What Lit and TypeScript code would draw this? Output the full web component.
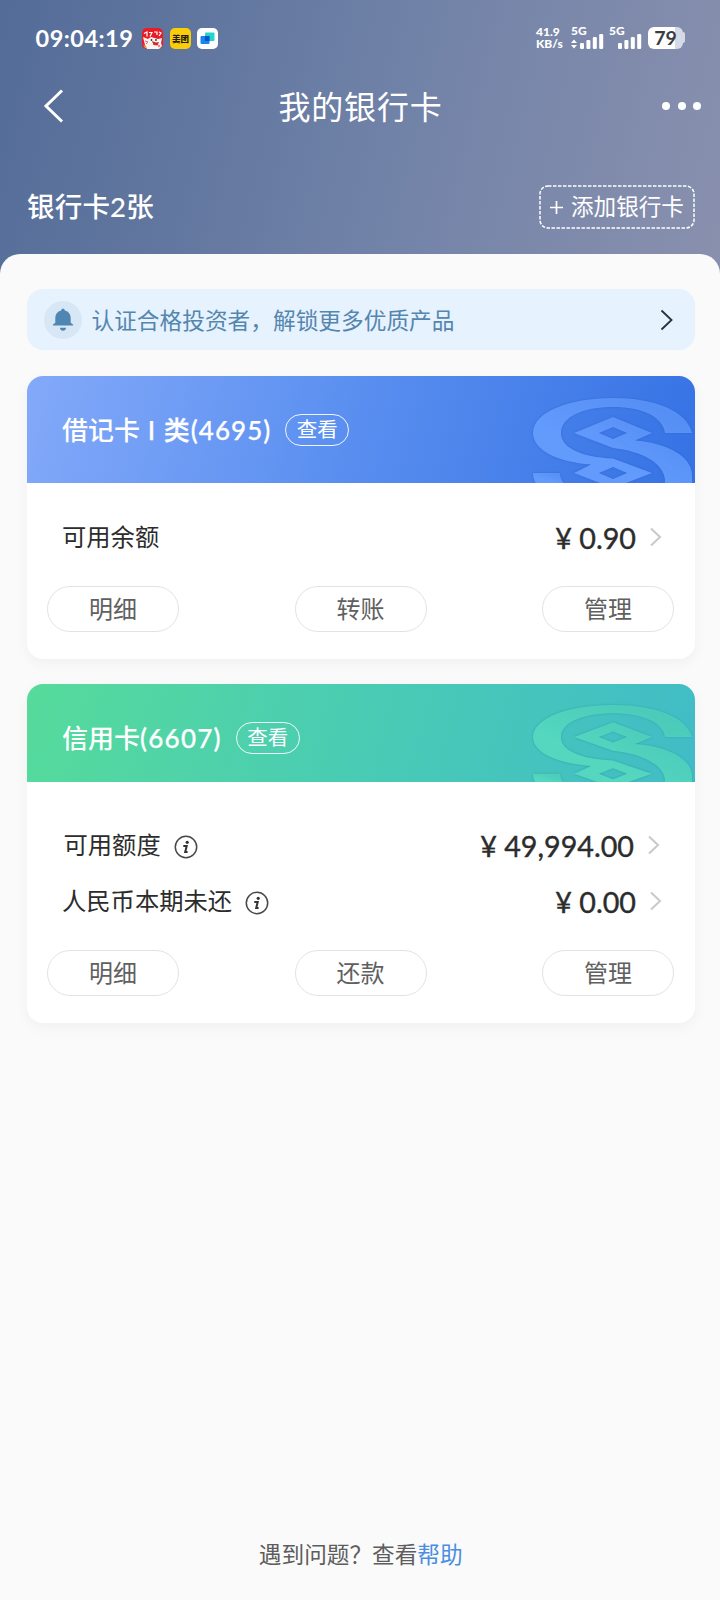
import { LitElement, html, css, svg } from "lit";
import { customElement, property } from "lit/decorators.js";

const chevron = html`<svg class="chev" width="12" height="20" viewBox="0 0 12 20"><path d="M1 1.500 10 10 1 18.500" fill="none" stroke="currentColor" stroke-width="2"/></svg>`;

const emblem = svg`
  <defs><linearGradient id="sheen" x1="0" y1="1" x2="0.900" y2="0"><stop offset="0.400" stop-color="currentColor"/><stop offset="1" stop-color="currentColor" stop-opacity="0.700"/></linearGradient></defs>
  <g fill="url(#sheen)" fill-rule="evenodd">
    <path d="M159 36H132C130 20 110 10 80 10C50 10 28 20 28 36C28 51 48 60 80 61.500L119 76L80 91L41 76L58 67.500C24 65 0 53 0 36C0 15 36 1 80 1C122 1 154 14 159 36ZM66 76L80 82L94 76L80 70Z"/>
    <path d="M80 20 119 36 102 43.500C135 46 159 60 159 78V100H128C131 94 132 89 132 84C132 66 108 54 80 51L41 36ZM66 36L80 42L94 36L80 30Z"/>
    <path d="M0 76H27C27 80 29 84 31 87H3C1 83 0 80 0 76Z"/>
  </g>`;

@customElement("bank-card")
export class BankCard extends LitElement {
  @property() name = "";
  @property() suffix = "";
  @property() kind = "debit";
  @property({ attribute: false }) rows: { label: string; amount: string; info?: boolean }[] = [];
  @property({ attribute: false }) actions: string[] = [];

  static styles = css`
    :host { display: block; border-radius: 16px; background: #fff; box-shadow: 0 4px 14px rgba(0, 0, 0, 0.045); overflow: hidden; }
    .head { display: flex; align-items: center; position: relative; overflow: hidden; box-sizing: border-box; padding-left: 35.500px; color: #fff; }
    .debit .head { height: 107px; background: linear-gradient(105deg, #83a9f9 0%, #5a8ff0 48%, #3572e4 100%); }
    .credit .head { height: 98px; background: linear-gradient(105deg, #56db9b 0%, #4accb3 48%, #41bcc7 100%); padding-top: 9px; }
    .mark { position: absolute; right: 2px; bottom: 0; width: 160px; }
    .debit .mark { height: 86px; color: #639bfd; filter: drop-shadow(0 0 1px rgba(35, 90, 200, 0.6)); }
    .credit .mark { height: 78px; color: #54d6bf; filter: drop-shadow(0 0 1px rgba(30, 140, 145, 0.6)); }
    .name { font-size: 26px; line-height: 34px; font-weight: 500; white-space: pre; }
    .suffix { letter-spacing: 1.050px; -webkit-text-stroke: 0.250px #fff; }
    .credit .suffix { letter-spacing: 1.250px; }
    .view { margin-left: 14px; width: 62px; height: 30px; border: 1px solid rgba(255, 255, 255, 0.9); border-radius: 16px; font-size: 20.500px; line-height: 29px; text-align: center; }
    .row { display: flex; align-items: center; height: 56px; padding: 0 33px 0 35.500px; color: #2c2c2c; }
    .debit .rows { padding: 26px 0 21px; }
    .credit .rows { padding: 35px 0 21px; }
    .credit .row:first-child { padding: 0 35px 0 37px; }
    .label { font-size: 24.300px; line-height: 34px; }
    .info { margin-left: 13px; margin-top: 3px; }
    .amount { margin-left: auto; font-size: 28.700px; line-height: 34px; padding-top: 1px; -webkit-text-stroke: 0.400px #2c2c2c; }
    .chev { color: #c9c9c9; margin-left: 14px; width: 12px; }
    .actions { display: flex; justify-content: space-between; padding: 0 21px 27px 20.500px; }
    .action { box-sizing: border-box; width: 132px; height: 46px; border: 1px solid #e3e3e3; border-radius: 23px; text-align: center; font-size: 24px; line-height: 44px; color: #606060; }
  `;

  render() {
    return html`<div class=${this.kind}>
      <div class="head">
        <svg class="mark" viewBox=${this.kind === "debit" ? "0 0 160 86" : "0 0 160 85"} preserveAspectRatio="none">${emblem}</svg>
        <div class="name">${this.name}<span class="suffix">${this.suffix}</span></div><div class="view">查看</div>
      </div>
      <div class="rows">
        ${this.rows.map((r) => html`<div class="row">
          <span class="label">${r.label}</span>
          ${r.info ? html`<svg class="info" width="24" height="24" viewBox="0 0 24 24"><circle cx="12" cy="12" r="10.700" fill="none" stroke="#484848" stroke-width="1.500"/><circle cx="13.200" cy="7.300" r="1.600" fill="#333"/><path d="M9.300 10.900h3.400l-1.500 6h2.400" fill="none" stroke="#333" stroke-width="2"/></svg>` : ""}
          <span class="amount">${r.amount}</span>${chevron}
        </div>`)}
      </div>
      <div class="actions">${this.actions.map((a) => html`<div class="action">${a}</div>`)}</div>
    </div>`;
  }
}

@customElement("app-root")
export class AppRoot extends LitElement {
  static styles = css`
    :host { display: flex; flex-direction: column; height: 1600px; overflow: hidden; font-family: Lato, "Noto Sans CJK SC", sans-serif; background: linear-gradient(104deg, #536c98 0, #5f759e 180px, #7283a8 430px, #8990ae 760px); }
    .status { display: flex; align-items: center; height: 30px; padding: 23px 35px 0 35.500px; color: #fff; }
    .time { width: 99px; font-size: 23.500px; font-weight: 700; line-height: 30px; letter-spacing: 0.500px; white-space: nowrap; }
    .apps { display: flex; gap: 6.500px; margin-left: 7.500px; }
    .net { margin-left: auto; width: 27px; font-size: 12px; line-height: 12px; font-weight: 900; white-space: nowrap; }
    .signals { margin-left: 8px; margin-top: -4px; }
    .battery { display: flex; width: 37px; height: 22px; margin-left: 5px; }
    .level { width: 35px; height: 22px; border-radius: 6px; background: linear-gradient(90deg, #fff 78%, #d5dae6 78%); color: #3b3d44; font-size: 19.500px; line-height: 22px; font-weight: 700; text-align: center; }
    .tip { width: 2px; height: 11px; margin-top: 5px; background: #d5dae6; border-radius: 0 2px 2px 0; }
    .nav { display: grid; grid-template-columns: 80px 1fr 80px; align-items: center; height: 48px; margin-top: 30px; padding: 0 19px 0 18px; color: #fff; }
    .back { margin-left: 25px; margin-bottom: 3px; }
    .title { text-align: center; font-size: 32px; letter-spacing: 0.800px; line-height: 48px; padding-left: 2px; }
    .more { display: flex; justify-content: flex-end; gap: 7.400px; margin-bottom: 2px; }
    .dot { width: 8px; height: 8px; border-radius: 50%; background: #fff; }
    .summary { display: flex; justify-content: space-between; align-items: center; padding: 54px 25px 25px 27px; color: #fff; }
    .count { font-size: 27.500px; font-weight: 500; line-height: 44px; margin-top: -1px; letter-spacing: 0.200px; }
    .add { display: flex; align-items: center; box-sizing: border-box; position: relative; width: 156px; height: 44px; padding: 0 0 3px 11px; font-size: 22.600px; white-space: nowrap; }
    .frame { position: absolute; left: 0; top: 0; }
    .plus { margin: 3px 8px 0 0; }
    .sheet { flex: 1; display: flex; flex-direction: column; box-sizing: border-box; border-radius: 20px 20px 0 0; background: #fafafa; padding: 35px 25px 28px 26.500px; }
    .notice { display: flex; align-items: center; height: 61px; border-radius: 16px; background: #e6f2fe; color: #5486ae; padding: 0 22px 0 17.500px; }
    .notice-text { margin-left: 9.500px; font-size: 22.700px; line-height: 32px; flex: 1; margin-top: 3px; }
    .go { color: #2c333c; }
    .first { margin-top: 26px; }
    .second { margin-top: 25px; }
    .foot { margin-top: auto; text-align: center; font-size: 22.650px; line-height: 34px; color: #5d5d5d; }
    .help { color: #4b8de0; }
  `;

  render() {
    const bars = (x: number) => [0, 1, 2, 3].map((i) => svg`<rect x=${x + i * 6.4} y=${17 - i * 3} width="4" height=${6 + i * 3} rx="1.2" fill="#fff"/>`);
    return html`
      <div class="status">
        <div class="time">09:04:19</div>
        <div class="apps">
          <svg width="21" height="21" viewBox="0 0 21 21"><rect width="21" height="21" rx="5" fill="#e91c25"/><path d="M2 5.500l3-1.500v4.500m2-4h3l-2 4m4-4.500h3v3m2-3l2 1-2 3" stroke="#fff" stroke-width="1.200" fill="none"/><path d="M1 9l5 2 3-2 7 2 4-1-1 5 1 3-3 3H5l-2-4Z" fill="#fff3f1"/><path d="M10 13l4 1.500 3-.5-1.500 3.500-4-.5Z" fill="#cc2b30"/><path d="M3 13l3 1-2 2M16 17l2 1-2 1" stroke="#ec6a6c" fill="none"/><circle cx="9.500" cy="12" r=".9" fill="#333"/><circle cx="14" cy="12" r=".9" fill="#333"/><path d="M1 16l4 4H3Z" fill="#f5ad2d"/></svg>
          <svg width="21" height="21" viewBox="0 0 21 21"><rect width="21" height="21" rx="5" fill="#fbcd08"/><text x="10.500" y="13.700" text-anchor="middle" font-size="8.500" font-weight="900" font-family="Noto Sans CJK SC" fill="#221c08">美团</text></svg>
          <svg width="21" height="21" viewBox="0 0 21 21"><rect width="21" height="21" rx="5" fill="#fff"/><rect x="8" y="4.500" width="9.500" height="8.500" rx="1" fill="#24d5cf"/><rect x="3.500" y="8" width="9" height="8" rx="1" fill="#1b82f2"/><rect x="8" y="8" width="4.500" height="5" fill="#0754c7"/></svg>
        </div>
        <div class="net">41.9<br>KB/s</div>
        <svg class="signals" width="72" height="28" viewBox="0 -4 72 28" fill="#fff" font-family="Lato" font-weight="900" font-size="12">
          <text x="0" y="9">5G</text><path d="M0 17l3-3.500 3 3.500zM0 19l3 3.500 3-3.500z"/>${bars(9)}
          <text x="38" y="9">5G</text>${bars(47)}
        </svg>
        <div class="battery"><div class="level">79</div><div class="tip"></div></div>
      </div>
      <div class="nav">
        <svg class="back" width="22" height="34" viewBox="0 0 22 34"><path d="M19 1.500 3 17 19 32.500" fill="none" stroke="#fff" stroke-width="3"/></svg>
        <div class="title">我的银行卡</div>
        <div class="more"><i class="dot"></i><i class="dot"></i><i class="dot"></i></div>
      </div>
      <div class="summary">
        <div class="count">银行卡2张</div>
        <div class="add"><svg class="frame" width="156" height="44"><rect x="1" y="1" width="154" height="42" rx="8" fill="none" stroke="#fff" stroke-width="1.500" stroke-dasharray="3.500 1.500"/></svg>
          <svg class="plus" width="13" height="14" viewBox="0 0 13 14"><path d="M0 7.500h13M6.500 1v13" stroke="#fff" stroke-width="1.700"/></svg>添加银行卡</div>
      </div>
      <div class="sheet">
        <div class="notice">
          <svg width="38" height="38" viewBox="0 0 38 38"><circle cx="19" cy="19" r="19" fill="#d7e7f5"/><path d="M19 7.800c1.200 0 1.700.7 1.800 1.600 4 1 5.900 4 5.900 7.800v4.500l2.500 2v.9H8.800v-.9l2.500-2v-4.500c0-3.800 1.900-6.800 5.900-7.800.1-.9.6-1.600 1.800-1.600ZM15.800 26.800h6.400c-.4 1.900-1.600 3-3.200 3s-2.800-1.100-3.200-3Z" fill="#4f86b4"/></svg>
          <div class="notice-text">认证合格投资者，解锁更多优质产品</div>
          <svg class="go" width="13" height="22" viewBox="0 0 13 22"><path d="M1.500 1.500 11.500 11 1.500 20.500" fill="none" stroke="currentColor" stroke-width="1.900"/></svg>
        </div>
        <bank-card class="first" kind="debit" name="借记卡" suffix=" I 类(4695)" .rows=${[{ label: "可用余额", amount: "¥ 0.90" }]} .actions=${["明细", "转账", "管理"]}></bank-card>
        <bank-card class="second" kind="credit" name="信用卡" suffix="(6607)" .rows=${[{ label: "可用额度", amount: "¥ 49,994.00", info: true }, { label: "人民币本期未还", amount: "¥ 0.00", info: true }]} .actions=${["明细", "还款", "管理"]}></bank-card>
        <div class="foot">遇到问题？查看<span class="help">帮助</span></div>
      </div>`;
  }
}
